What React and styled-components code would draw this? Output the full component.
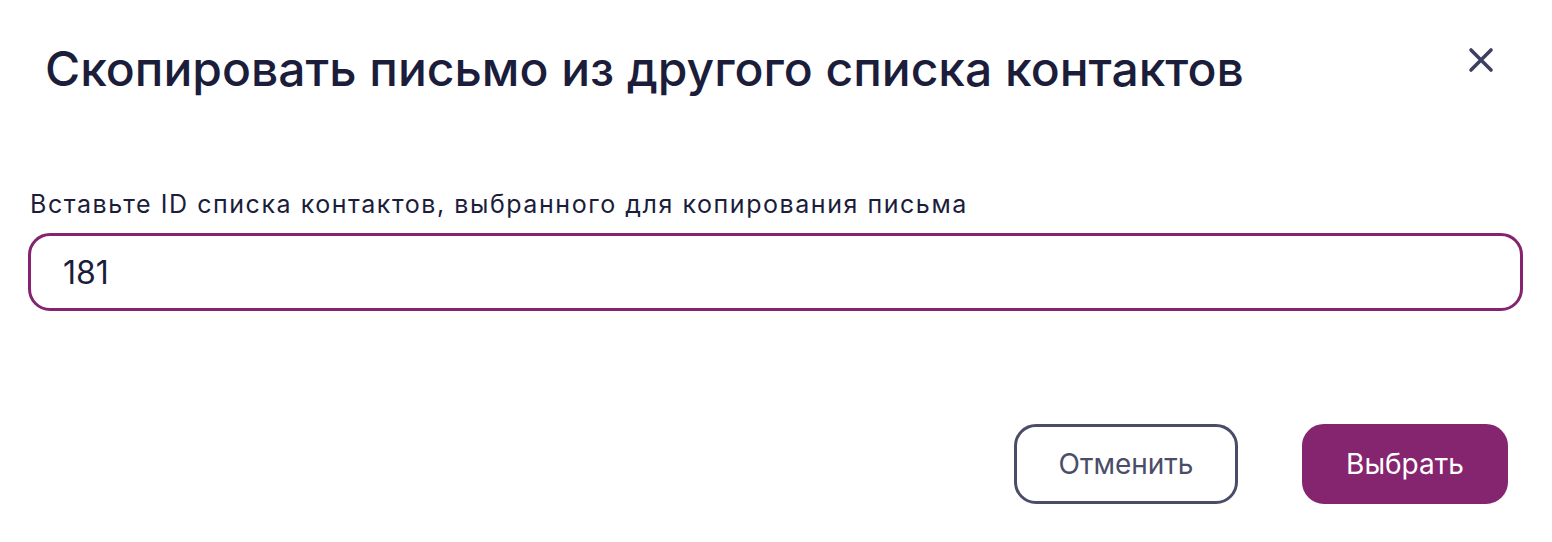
import React, { useState } from 'react'
import styled, { createGlobalStyle } from 'styled-components'

const Global = createGlobalStyle`
  html, body {
    margin: 0;
    background: #fff;
  }
  body {
    font-family: Inter, "Noto Sans", sans-serif;
  }
`

const Modal = styled.div`
  display: flex;
  flex-direction: column;
  padding: 40px 29px 38px 28px;
`

const Header = styled.div`
  display: flex;
  align-items: flex-start;
  justify-content: space-between;
  padding-left: 17px;
  padding-right: 18px;
`

const Title = styled.h2`
  margin: 0;
  font-size: 48px;
  line-height: 58px;
  font-weight: 500;
  color: #1b1d3b;
`

const CloseButton = styled.button`
  display: flex;
  align-items: center;
  justify-content: center;
  width: 48px;
  height: 48px;
  margin-top: -4px;
  padding: 0;
  border: none;
  background: none;
  cursor: pointer;
  color: #3f4060;
`

const Field = styled.label`
  display: flex;
  flex-direction: column;
  gap: 14px;
  margin-top: 92px;
`

const Caption = styled.span`
  font-size: 25px;
  line-height: 29px;
  letter-spacing: 1.55px;
  color: #1b1d3b;
  padding-left: 2px;
`

const Input = styled.input`
  box-sizing: border-box;
  width: 100%;
  height: 78px;
  padding: 0 32px;
  border: 3px solid #85236f;
  border-radius: 22px;
  outline: none;
  font-family: Inter, "Noto Sans", sans-serif;
  font-size: 32px;
  color: #1b1d3b;
  background: #fff;
`

const Actions = styled.div`
  display: flex;
  justify-content: flex-end;
  gap: 64px;
  margin-top: 113px;
  padding-right: 15px;
`

const Button = styled.button`
  box-sizing: border-box;
  height: 80px;
  width: ${({ primary }) => (primary ? '206px' : '224px')};
  padding: 0;
  border-radius: 22px;
  border: 3px solid ${({ primary }) => (primary ? '#85256f' : '#4a4d68')};
  background: ${({ primary }) => (primary ? '#85256f' : '#fff')};
  color: ${({ primary }) => (primary ? '#fff' : '#4a4d68')};
  font-family: Inter, "Noto Sans", sans-serif;
  font-size: 28px;
  cursor: pointer;
`

function CloseIcon() {
  return (
    <svg width="26" height="26" viewBox="0 0 26 26" fill="none">
      <path d="M3 3L23 23M23 3L3 23" stroke="currentColor" strokeWidth="3.6" strokeLinecap="round" />
    </svg>
  )
}

export default function App() {
  const [value, setValue] = useState('181')
  return (
    <>
      <Global />
      <Modal>
        <Header>
          <Title>Скопировать письмо из другого списка контактов</Title>
          <CloseButton aria-label="Закрыть">
            <CloseIcon />
          </CloseButton>
        </Header>
        <Field>
          <Caption>Вставьте ID списка контактов, выбранного для копирования письма</Caption>
          <Input value={value} onChange={e => setValue(e.target.value)} />
        </Field>
        <Actions>
          <Button>Отменить</Button>
          <Button primary>Выбрать</Button>
        </Actions>
      </Modal>
    </>
  )
}
